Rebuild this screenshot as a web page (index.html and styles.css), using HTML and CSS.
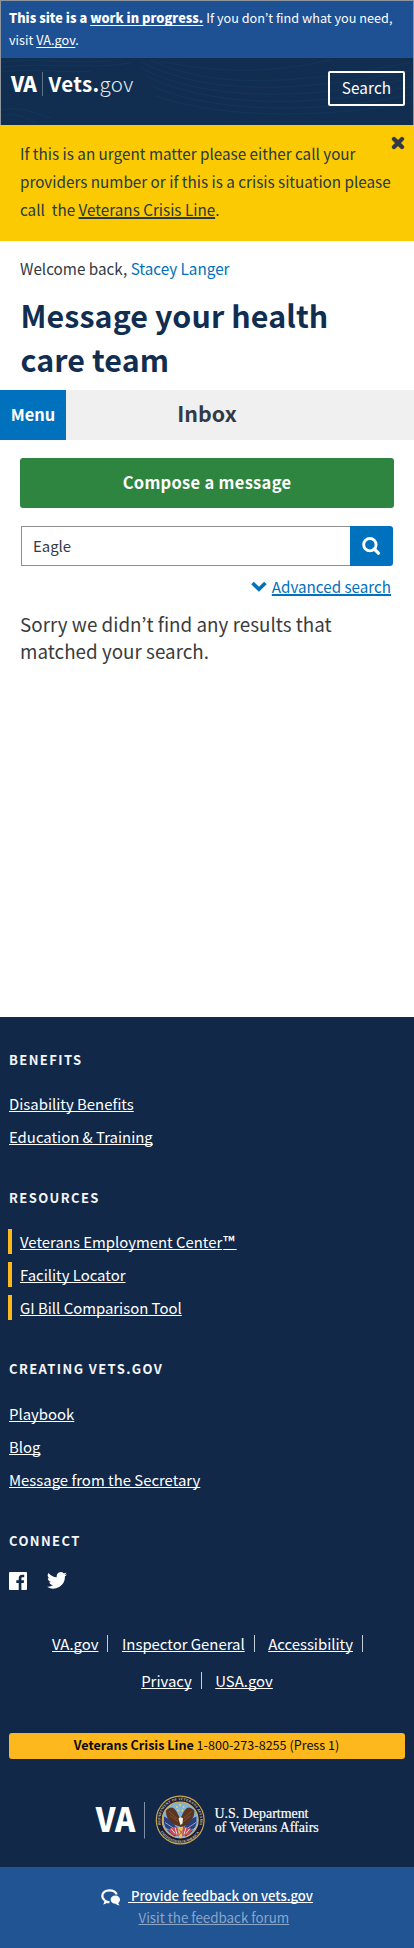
FILE: index.html
```html
<!DOCTYPE html>
<html lang="en">
<head>
<meta charset="utf-8">
<title>Vets.gov – Message your health care team</title>
<link rel="stylesheet" href="styles.css">
</head>
<body>
<div class="top">
  <p class="notice"><strong>This site is a <a href="#">work in progress.</a></strong> <span>If you don’t find what you need,<br>visit <a href="#">VA.gov</a>.</span></p>
  <header class="header">
    <svg class="waves" width="412" height="67" viewBox="0 0 412 67" fill="none" stroke="#1b4a78" stroke-width=".7" opacity=".35">
      <path d="M0 4C40 0 70 6 110 3M0 9C50 4 90 12 130 5M0 14C40 9 60 16 90 13M150 2C200 26 270 32 412 4M140 4C200 34 280 38 412 12M140 10C200 42 300 44 412 20M145 18C210 50 310 50 412 28M150 28C220 58 330 54 412 36M155 38C230 64 340 58 412 44M0 52C20 48 30 54 50 60M0 58C15 54 25 60 35 65M160 3C220 16 270 15 330 2"/>
    </svg>
    <div class="brand"><b class="va">VA</b><i class="rule"></i><span class="vets"><b>Vets.</b>gov</span></div>
    <button class="search-btn">Search</button>
  </header>
</div>
<div class="alert">
  <p>If this is an urgent matter please either call your<br>providers number or if this is a crisis situation please<br>call&nbsp; the <a href="#">Veterans Crisis Line</a>.</p>
  <svg class="close" width="14" height="14" viewBox="0 0 14 14" stroke="#323a45" stroke-width="4.3" stroke-linecap="round"><path d="M3 3l8 8M11 3l-8 8"/></svg>
</div>
<main>
  <p class="welcome">Welcome back, <a href="#">Stacey Langer</a></p>
  <h1>Message your health<br>care team</h1>
  <div class="bar"><button class="menu">Menu</button><h2>Inbox</h2></div>
  <button class="compose">Compose a message</button>
  <div class="searchbox">
    <div class="field">Eagle</div>
    <button class="go"><svg width="20" height="20" viewBox="0 0 20 20" fill="none" stroke="#fff"><circle cx="8.9" cy="8.7" r="6.2" stroke-width="2.9"/><path d="M13.4 13.2l4 4" stroke-width="3.3" stroke-linecap="round"/></svg></button>
  </div>
  <p class="advanced"><svg width="16" height="11" viewBox="0 0 16 11" fill="none" stroke="#0071bc" stroke-width="3.6"><path d="M1.5 2l6.4 6.3L14.4 2"/></svg><a href="#">Advanced search</a></p>
  <p class="sorry">Sorry we didn’t find any results that<br>matched your search.</p>
</main>
<footer>
  <section class="links">
    <h3>BENEFITS</h3>
    <ul><li><a href="#">Disability Benefits</a></li><li><a href="#">Education &amp; Training</a></li></ul>
  </section>
  <section class="links resources">
    <h3>RESOURCES</h3>
    <ul><li><a href="#">Veterans Employment Center<span class="tm">™</span></a></li><li><a href="#">Facility Locator</a></li><li><a href="#">GI Bill Comparison Tool</a></li></ul>
  </section>
  <section class="links creating">
    <h3>CREATING VETS.GOV</h3>
    <ul><li><a href="#">Playbook</a></li><li><a href="#">Blog</a></li><li><a href="#">Message from the Secretary</a></li></ul>
  </section>
  <section class="connect">
    <h3>CONNECT</h3>
    <div class="social">
      <svg width="18" height="18" viewBox="0 0 18 18"><path fill="#fff" d="M1 0h16a1 1 0 0 1 1 1v16a1 1 0 0 1-1 1h-4.6v-7h2.3l.4-2.7h-2.7V6.600c0-.8.3-1.300 1.400-1.300h1.400V2.900c-.3 0-1.100-.1-2-.1-2.100 0-3.500 1.200-3.500 3.500v2H7.300V11h2.400v7H1a1 1 0 0 1-1-1V1a1 1 0 0 1 1-1z"/></svg>
      <svg width="20" height="17" viewBox="0 0 24 20"><path fill="#fff" d="M24 2.400a9.800 9.800 0 0 1-2.800.8A4.900 4.900 0 0 0 23.300.4a9.900 9.900 0 0 1-3.100 1.200 4.900 4.900 0 0 0-8.400 4.500A14 14 0 0 1 1.700 1a4.900 4.900 0 0 0 1.500 6.600 4.900 4.900 0 0 1-2.200-.6c0 2.300 1.600 4.400 3.900 4.900a5 5 0 0 1-2.200.1 4.900 4.900 0 0 0 4.600 3.400A9.900 9.900 0 0 1 0 17.500 14 14 0 0 0 21.500 5a10 10 0 0 0 2.500-2.600z"/></svg>
    </div>
  </section>
  <nav class="legal">
    <div><span><a href="#">VA.gov</a></span><span><a href="#">Inspector General</a></span><span><a href="#">Accessibility</a></span></div>
    <div><span><a href="#">Privacy</a></span><span class="last"><a href="#">USA.gov</a></span></div>
  </nav>
  <p class="crisis"><b>Veterans Crisis Line</b> 1-800-273-8255 (Press 1)</p>
  <svg class="va-logo" width="240" height="52" viewBox="95 1793.500 240 52">
    <text x="95.800" y="1831.500" class="logo-va" textLength="39.400" lengthAdjust="spacingAndGlyphs">VA</text>
    <path d="M144.500 1801.500v36.500" stroke="#8c9bb0" stroke-width=".9"/>
    <circle cx="180.200" cy="1819.500" r="24.500" fill="#c5a94e"/>
    <circle cx="180.200" cy="1819.500" r="23.300" fill="#191c40"/>
    <circle cx="180.200" cy="1819.500" r="18" fill="#7fb2d9" stroke="#cfb35a" stroke-width="1.100"/>
    <path id="ringTop" d="M160.800 1824.500A20 20 0 1 1 199.600 1824.500" fill="none"/>
    <path id="ringBottom" d="M160 1830.400A23 23 0 0 0 200.400 1830.400" fill="none"/>
    <text class="ring"><textPath href="#ringTop" textLength="72">DEPARTMENT OF VETERANS AFFAIRS</textPath></text>
    <text class="ring"><textPath href="#ringBottom" startOffset="1" textLength="46">UNITED STATES OF AMERICA</textPath></text>
    <path d="M164 1816l8 4 6 10-3 6q-9-5-11-13zM196.400 1816l-8 4-6 10 3 6q9-5 11-13z" fill="#2a3f7d"/>
    <path d="M165 1822l12 8M166 1828l10 5M196 1822l-12 8M195 1828l-10 5" stroke="#dce4ef" stroke-width=".6"/>
    <path d="M168 1829l9-3 3 10-8-2zM192 1829l-9-3-2 10 8-2z" fill="#c9485a"/>
    <path d="M171 1828l4 5M175 1827l2 7M190 1828l-4 5M186 1827l-2 7" stroke="#f3e5df" stroke-width=".9"/>
    <path d="M180 1826c-4-1-7-2-9-5-4-3-5-6-5-11 2-2 4-3 6-3 3 1 5 4 6.500 8l1.700 3 1.700-3c1.500-4 3.500-7 6.500-8 2 0 4 1 6 3 0 5-1 8-5 11-2 3-4 4-6 5l-1.500 3z" fill="#5c3520"/>
    <path d="M169 1811l8 7M170 1815l8 6M191.500 1811l-8 7M190.500 1815l-7 6" stroke="#895b38" stroke-width=".9"/>
    <path d="M178.500 1818q2-2.500 4.500 0l-.5 5-2 1.500z" fill="#f5efe2"/>
    <path d="M178 1827l5-1-1 11h-3z" fill="#e3c265"/>
    <path d="M179 1829l4 5M183 1829l-4 6" stroke="#a8513b" stroke-width=".8"/>
    <g fill="#e8cf5a"><circle cx="180.200" cy="1804.500" r="1"/><circle cx="176.800" cy="1806.500" r="1"/><circle cx="183.600" cy="1806.500" r="1"/><circle cx="178" cy="1810" r="1"/><circle cx="182.400" cy="1810" r="1"/></g>
    <text x="214.500" y="1817.600" class="dept" textLength="94" lengthAdjust="spacingAndGlyphs">U.S. Department</text>
    <text x="214.700" y="1831.300" class="dept" textLength="104" lengthAdjust="spacingAndGlyphs">of Veterans Affairs</text>
  </svg>
</footer>
<div class="feedback">
  <svg width="20" height="17" viewBox="0 0 20 17"><path d="M3.800 11.200C2.200 10.200 1.300 8.600 1.300 6.800 1.300 3.700 4.300 1.300 8.300 1.300c3.700 0 6.500 1.700 7.400 4.200" fill="none" stroke="#fff" stroke-width="2.200"/><path fill="#fff" d="M3.200 10.200l2.600 1.400 2.900.6-.4 2c-1 .1-1.800 0-2.500-.2-1.100.9-2.300 1.400-4 1.400 1-.9 1.700-2 1.400-3.200z"/><path fill="#fff" d="M14.300 6.500c2.700 0 4.700 1.800 4.700 4.100 0 1.500-.7 2.700-1.700 3.400.1 1.100.6 1.700 1.500 2.300-1.700.1-2.900-.3-4-1.500-3 .1-5.200-1.700-5.200-4.200 0-2.300 2-4.100 4.700-4.100z"/></svg>
  <div><a class="give" href="#">&nbsp;Provide feedback on vets.gov</a><a class="forum" href="#">Visit the feedback forum</a></div>
</div>
</body>
</html>
```
FILE: styles.css
```css
* { box-sizing: border-box; }
body, p, h1, h2, h3, ul { margin: 0; padding: 0; }
body { width: 414px; background: #fff; font-family: "Noto Sans CJK KR", "Noto Sans", sans-serif; color: #323a45; }
ul { list-style: none; }
svg { display: block; }
button { font: inherit; border: 0; padding: 0; margin: 0; }
a { color: inherit; text-decoration: underline; text-decoration-skip-ink: none; text-decoration-thickness: 1px; text-underline-offset: 1px; }

.top { height: 125px; border: 1px solid #8e959c; border-bottom: 0; background: #112e51; }
.notice { height: 57px; padding: 6px 0 0 8px; background: #1e5094; color: #fff; font-size: 12.67px; line-height: 21.5px; letter-spacing: .02px; white-space: nowrap; }
.notice strong { font-weight: 900; font-size: 12.77px; }
.notice a { text-underline-offset: 2px; }
.header { position: relative; height: 67px; padding: 13px 8px 0 10px; display: flex; justify-content: space-between; align-items: flex-start; }
.waves { position: absolute; left: 0; top: 0; }
.brand { position: relative; display: flex; color: #fff; line-height: 24px; font-size: 20.5px; }
.va { font-weight: 900; letter-spacing: -.6px; }
.rule { width: 1px; height: 24px; margin: 1px 6px 0 5.500px; background: #5d7189; }
.vets { font-weight: 300; color: #e6ebf1; letter-spacing: .35px; }
.vets b { font-weight: 700; color: #fff; }
.search-btn { position: relative; width: 77px; height: 35px; border: 2px solid #fff; border-radius: 2px; background: none; color: #fff; font-size: 15.3px; line-height: 29px; padding-bottom: 2px; letter-spacing: .1px; }

.alert { position: relative; height: 116px; padding: 14px 0 0 20px; background: #fbca02; color: #263a43; font-size: 15.22px; line-height: 28px; letter-spacing: .01px; white-space: nowrap; }
.alert a { text-underline-offset: 1px; text-decoration-thickness: 1.500px; }
.close { position: absolute; right: 9px; top: 11px; }

.welcome { padding: 13px 0 0 20px; height: 66px; font-size: 15.25px; line-height: 28px; }
.welcome a { color: #0071bc; text-decoration: none; }
h1 { height: 83px; padding-left: 20.500px; color: #112e51; font-size: 30.4px; line-height: 44px; letter-spacing: .1px; font-weight: 700; margin-top: -14px; margin-bottom: 14px; }
.bar { position: relative; height: 50px; display: flex; background: #f0f0f0; }
.menu { width: 66px; background: #0071bc; color: #fff; font-weight: 700; font-size: 16.4px; padding-bottom: 3px; }
.bar h2 { flex: 1; margin-right: 66px; text-align: center; font-size: 21.4px; line-height: 46px; }
.compose { display: block; width: 374px; height: 50px; margin: 18px 20px; padding-bottom: 2px; border-radius: 3px; background: #2e8540; color: #fff; font-weight: 700; font-size: 16.5px; letter-spacing: .3px; }
.searchbox { display: flex; width: 372px; height: 40px; margin-left: 21px; }
.field { flex: 1; border: 1px solid #8d8f92; border-right: 0; padding-left: 11px; font-size: 14.9px; line-height: 38px; }
.go { width: 43px; background: #0071bc; border-radius: 0 3px 3px 0; display: flex; align-items: center; justify-content: center; padding-right: 2px; }
.advanced { display: flex; justify-content: flex-end; align-items: center; gap: 5px; height: 28px; margin-top: 6px; margin-bottom: 1px; padding-right: 23px; color: #0071bc; font-size: 15.2px; line-height: 28px; }
.advanced a { text-decoration-thickness: 2px; }
.sorry { height: 416px; padding: 9px 0 0 20px; color: #3b3b3b; font-size: 18.8px; line-height: 27.300px; letter-spacing: .03px; white-space: nowrap; }

footer { height: 850px; background: #112849; color: #fff; font-size: 14.9px; padding-top: 28px; }
footer h3 { font-size: 13px; letter-spacing: 1.400px; line-height: 30px; font-weight: 700; padding-left: 9px; height: 41.500px; color: #f4f6f8; }
footer .creating h3, footer .connect h3 { height: 42.500px; }
.links { height: 138px; }
.links li { height: 33.200px; line-height: 33.200px; padding-left: 9px; }
.resources { height: 171px; }
.resources li { display: flex; align-items: center; gap: 8.500px; padding-left: 8px; font-size: 14.9px; }
.resources li::before { content: ""; width: 3.500px; height: 25px; background: #fdb81e; }
.tm { font-weight: 500; font-size: 15.500px; line-height: 1; margin-left: 1px; letter-spacing: 2px; }
.creating { height: 172px; }
.social { display: flex; gap: 20px; align-items: center; padding: 3px 0 0 9px; }
.legal { margin-top: 35px; line-height: 37px; }
.legal div { display: flex; justify-content: center; }
.legal span { display: flex; align-items: center; }
.legal span::after { content: ""; width: 1px; height: 17px; margin: 0 13.500px 0 9px; background: #c4ccd6; }
.legal div:first-child { padding-left: 1px; }
.legal div:first-child span:last-child::after { margin-right: 0; }
.legal .last::after { display: none; }
.crisis { width: 396px; height: 26px; margin: 34.500px 0 0 8.500px; border-radius: 3px; background: #fdb81e; color: #0b0b0b; text-align: center; font-size: 12.6px; line-height: 24px; }
.va-logo { margin: 34.500px 0 0 95px; overflow: visible; }
.logo-va { font-weight: 900; font-size: 33.500px; fill: #fff; }
.ring { font-family: "Liberation Serif", serif; font-weight: 700; font-size: 3.600px; fill: #d9c787; }
.dept { font-family: "Liberation Serif", serif; font-size: 15px; fill: #fff; stroke: #fff; stroke-width: .2px; }
.feedback { height: 81px; padding: 22px 0 0 100.500px; display: flex; gap: 7.500px; background: #205493; color: #fff; font-size: 13.35px; line-height: 22px; }
.feedback > div { margin-top: -4px; display: flex; flex-direction: column; align-items: flex-start; }
.give { font-weight: 500; font-size: 13.050px; }
.forum { margin-left: 10.500px; color: #8ba6c9; }
```
